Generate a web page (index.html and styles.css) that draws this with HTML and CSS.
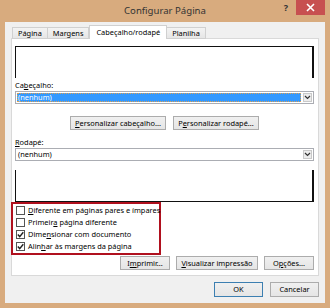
FILE: index.html
```html
<!DOCTYPE html>
<html lang="pt">

<head>
    <meta charset="UTF-8">
    <title>Configurar Página</title>
    <link rel="stylesheet" href="styles.css">
</head>

<body>
    <div class="window">
        <div class="titlebar">
            <span></span>
            <div class="title">Configurar Página</div>
            <div class="controls">
                <span class="help">?</span>
                <span class="close">
                    <svg width="9" height="9" viewBox="0 0 9 9"><path d="M1 1L8 8M8 1L1 8" stroke="#fff" stroke-width="1.6"/></svg>
                </span>
            </div>
        </div>

        <div class="dialog">
            <div class="tabs">
                <div class="tab">Página</div>
                <div class="tab">Margens</div>
                <div class="tab active">Cabeçalho/rodapé</div>
                <div class="tab">Planilha</div>
            </div>

            <div class="panel">
                <div class="preview preview-top"></div>

                <div class="field-label">Ca<u>b</u>eçalho:</div>
                <div class="select">
                    <span class="select-value selected">(nenhum)</span>
                    <span class="select-arrow">
                        <svg width="7" height="5" viewBox="0 0 7 5"><path d="M1 1L3.5 3.5L6 1" fill="none" stroke="#333" stroke-width="1.2"/></svg>
                    </span>
                </div>

                <div class="custom-row">
                    <button class="btn btn-header"><u>P</u>ersonalizar cabeçalho...</button>
                    <button class="btn btn-footer">P<u>e</u>rsonalizar rodapé...</button>
                </div>

                <div class="field-label field-label-footer"><u>R</u>odapé:</div>
                <div class="select">
                    <span class="select-value">(nenhum)</span>
                    <span class="select-arrow">
                        <svg width="7" height="5" viewBox="0 0 7 5"><path d="M1 1L3.5 3.5L6 1" fill="none" stroke="#333" stroke-width="1.2"/></svg>
                    </span>
                </div>

                <div class="preview preview-bottom"></div>

                <div class="options">
                    <div class="option">
                        <span class="checkbox"></span>
                        <span><u>D</u>iferente em páginas pares e ímpares</span>
                    </div>
                    <div class="option">
                        <span class="checkbox"></span>
                        <span>Primeir<u>a</u> página diferente</span>
                    </div>
                    <div class="option">
                        <span class="checkbox">
                            <svg width="7" height="7" viewBox="0 0 7 7"><path d="M0.8 3.6L2.7 5.6L6.3 1.2" fill="none" stroke="#222" stroke-width="1.4"/></svg>
                        </span>
                        <span>Dime<u>n</u>sionar com documento</span>
                    </div>
                    <div class="option">
                        <span class="checkbox">
                            <svg width="7" height="7" viewBox="0 0 7 7"><path d="M0.8 3.6L2.7 5.6L6.3 1.2" fill="none" stroke="#222" stroke-width="1.4"/></svg>
                        </span>
                        <span>Alin<u>h</u>ar às margens da página</span>
                    </div>
                </div>

                <div class="panel-buttons">
                    <button class="btn">I<u>m</u>primir...</button>
                    <button class="btn btn-wide"><u>V</u>isualizar impressão</button>
                    <button class="btn">O<u>p</u>ções...</button>
                </div>
            </div>

            <div class="dialog-buttons">
                <button class="btn btn-default">OK</button>
                <button class="btn">Cancelar</button>
            </div>
        </div>
    </div>
</body>

</html>
```

FILE: styles.css
```css
body {
    margin: 0;
    font-family: "Noto Sans", Arial, sans-serif;
    font-size: 7.4px;
    color: #000;
}

.window {
    width: 330px;
    height: 308px;
    box-sizing: border-box;
    padding: 0 5px 5px;
    background-color: #d8ab7e;
    display: flex;
    flex-direction: column;
}

.titlebar {
    height: 22px;
    display: grid;
    grid-template-columns: 1fr auto 1fr;
}

.title {
    line-height: 22px;
    font-size: 9.6px;
    color: #333;
}

.controls {
    display: flex;
    justify-content: flex-end;
    align-items: flex-start;
}

.help {
    font-size: 9px;
    font-weight: bold;
    color: #333;
    line-height: 15px;
    margin-right: 8px;
}

.close {
    width: 29px;
    height: 15px;
    background-color: #c75050;
    display: flex;
    justify-content: center;
    align-items: center;
}

.dialog {
    flex: 1;
    background-color: #f0f0f0;
    padding: 3px 6px 0;
    display: flex;
    flex-direction: column;
}

.tabs {
    display: flex;
    align-items: flex-end;
    padding-left: 1px;
    margin-bottom: -1px;
    position: relative;
    z-index: 1;
}

.tab {
    height: 12px;
    box-sizing: border-box;
    padding: 0 5px;
    line-height: 11px;
    white-space: nowrap;
    border: 1px solid #d0d0d0;
    border-left: none;
    background: linear-gradient(#f3f3f3, #e6e6e6);
}

.tab:first-child {
    border-left: 1px solid #d0d0d0;
}

.tab.active {
    height: 14px;
    line-height: 13px;
    background: #fff;
    border-left: 1px solid #d0d0d0;
    border-bottom: none;
    padding: 0 6px;
}

.panel {
    background-color: #fff;
    border: 1px solid #d9d9d9;
    padding: 7px 4px 5px 3px;
    display: flex;
    flex-direction: column;
}

.preview {
    height: 32px;
    box-sizing: border-box;
    border-left: 1px solid #111;
    border-right: 2px solid #111;
}

.preview-top {
    border-top: 1px solid #111;
}

.preview-bottom {
    margin-top: 9px;
    border-bottom: 1px solid #111;
}

.field-label {
    margin-top: 2px;
    line-height: 11px;
}

.field-label-footer {
    margin-top: 7px;
}

.select {
    height: 13px;
    box-sizing: border-box;
    border: 1px solid #abadb3;
    display: flex;
    padding: 1px;
}

.select-value {
    flex: 1;
    line-height: 9px;
    padding-left: 1px;
}

.select-value.selected {
    background-color: #3399ff;
    color: #fff;
    outline: 1px dotted #e0a050;
    outline-offset: -1px;
}

.select-arrow {
    width: 9px;
    margin-left: 2px;
    box-sizing: border-box;
    border: 1px solid #c9c9c9;
    background-color: #ececec;
    display: flex;
    justify-content: center;
    align-items: center;
}

.btn {
    height: 14px;
    width: 50px;
    box-sizing: border-box;
    padding: 0;
    font-family: inherit;
    font-size: 7.4px;
    line-height: 12px;
    white-space: nowrap;
    color: #000;
    border: 1px solid #acacac;
    background: linear-gradient(#f0f0f0, #e5e5e5);
}

.btn-wide {
    width: 82px;
}

.btn-header {
    width: 96px;
}

.btn-footer {
    width: 86px;
}

.custom-row {
    display: flex;
    justify-content: center;
    gap: 7px;
    margin-top: 12px;
}

.options {
    width: 150px;
    box-sizing: border-box;
    margin-left: -4px;
    border: 2px solid #b0101e;
    padding: 0 0 1px 3px;
}

.option {
    height: 12px;
    display: flex;
    align-items: center;
    gap: 3px;
    white-space: nowrap;
}

.checkbox {
    width: 9px;
    height: 9px;
    flex-shrink: 0;
    box-sizing: border-box;
    border: 1px solid #555;
    background-color: #fff;
    display: flex;
    justify-content: center;
    align-items: center;
}

.panel-buttons {
    display: flex;
    justify-content: flex-end;
    gap: 6px;
    margin-top: 1px;
}

.dialog-buttons {
    display: flex;
    justify-content: flex-end;
    gap: 7px;
    margin-top: 6px;
}

.dialog-buttons .btn {
    height: 15px;
    width: 49px;
    line-height: 13px;
}

.btn-default {
    border-color: #3c7fb1;
}
```
